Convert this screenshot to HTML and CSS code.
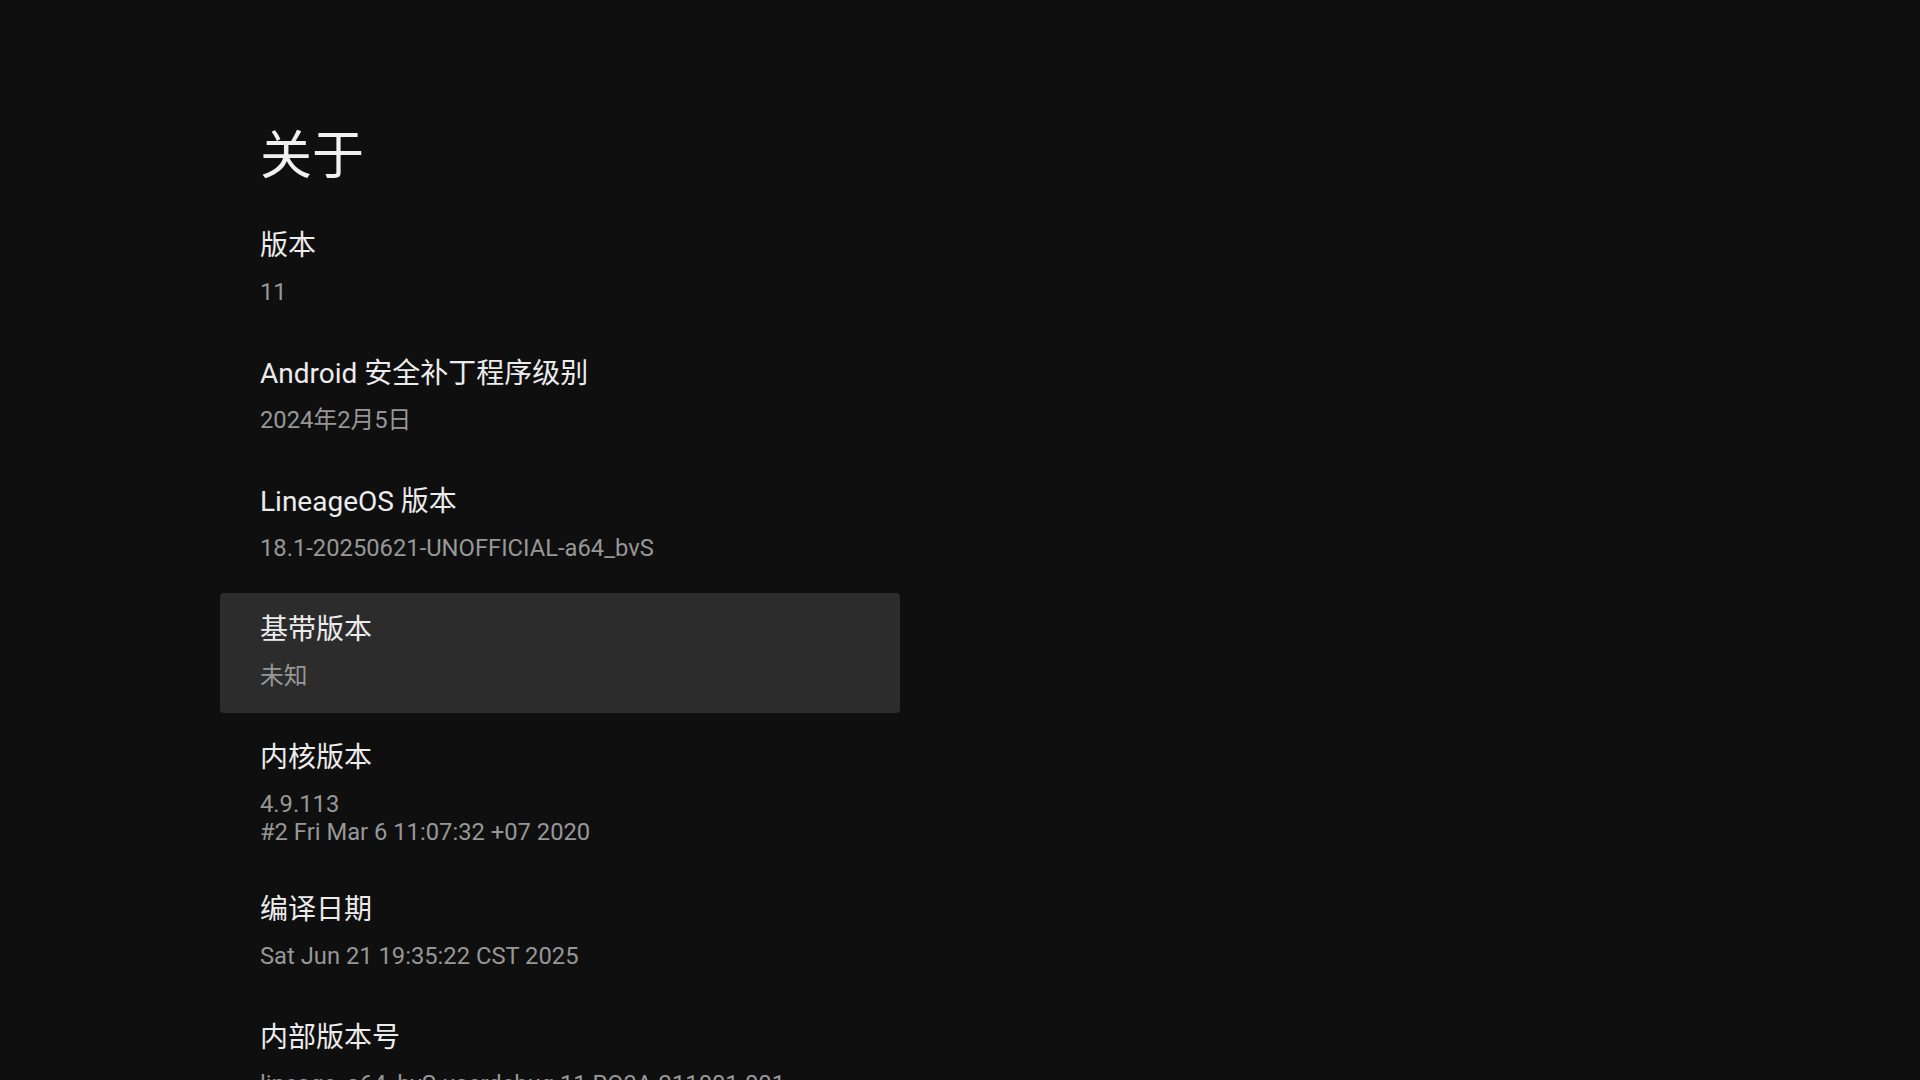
FILE: index.html
```html
<!DOCTYPE html>
<html lang="zh-CN">
<head>
  <meta charset="UTF-8">
  <title>关于</title>
  <link rel="stylesheet" href="styles.css">
</head>
<body>

  <div class="page">
    <h1 class="page-title">关于</h1>

    <!-- Device info list -->
    <div class="pref-list">
      <div class="pref">
        <div class="pref-title">版本</div>
        <div class="pref-summary">11</div>
      </div>
      <div class="pref">
        <div class="pref-title">Android 安全补丁程序级别</div>
        <div class="pref-summary">2024年2月5日</div>
      </div>
      <div class="pref">
        <div class="pref-title">LineageOS 版本</div>
        <div class="pref-summary">18.1-20250621-UNOFFICIAL-a64_bvS</div>
      </div>
      <div class="pref focused">
        <div class="pref-title">基带版本</div>
        <div class="pref-summary">未知</div>
      </div>
      <div class="pref">
        <div class="pref-title">内核版本</div>
        <div class="pref-summary">4.9.113<br>#2 Fri Mar 6 11:07:32 +07 2020</div>
      </div>
      <div class="pref">
        <div class="pref-title">编译日期</div>
        <div class="pref-summary">Sat Jun 21 19:35:22 CST 2025</div>
      </div>
      <div class="pref">
        <div class="pref-title">内部版本号</div>
        <div class="pref-summary">lineage_a64_bvS-userdebug 11 RQ3A.211001.001</div>
      </div>
    </div>
  </div>

</body>
</html>
```

FILE: styles.css
```css
body {
  margin: 0;
  height: 100vh;
  overflow: hidden;
  background-color: #0f0f0f;
  color: #ececec;
  font-family: Roboto, "Noto Sans CJK SC", sans-serif;
}

.page {
  width: 680px;
  padding: 125px 0 0 220px;
}

.page-title {
  margin: 0 0 20px 40px;
  font-size: 52px;
  line-height: 64px;
  font-weight: 400;
  color: #f0f0f0;
}

.pref-list {
  display: flex;
  flex-direction: column;
  gap: 8px;
}

.pref {
  box-sizing: border-box;
  min-height: 120px;
  padding: 21px 40px 19px;
  border-radius: 4px;
}

.pref.focused {
  background-color: #2c2c2c;
}

.pref-title {
  font-size: 28px;
  line-height: 32px;
  color: #ececec;
}

.pref-summary {
  margin-top: 16px;
  font-size: 23.75px;
  line-height: 28px;
  color: #979797;
}
```
